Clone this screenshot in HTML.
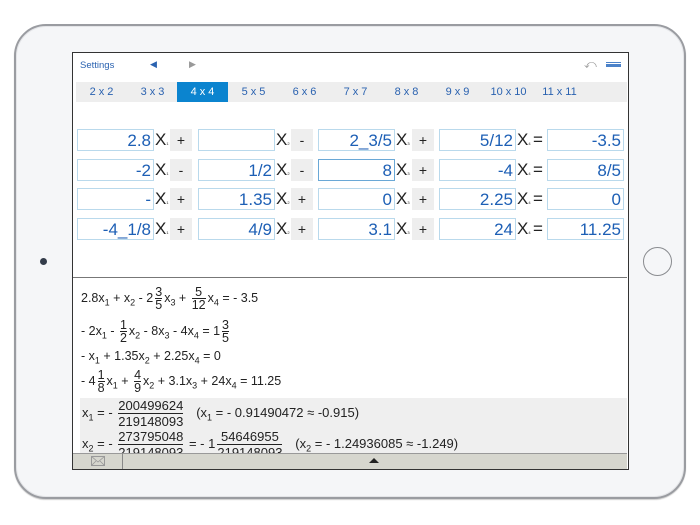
<!DOCTYPE html>
<html><head><meta charset="utf-8"><style>
*{margin:0;padding:0;box-sizing:border-box}
body{width:700px;height:525px;background:#fff;position:relative;overflow:hidden;font-family:"Liberation Sans",sans-serif}
.pad{position:absolute;left:14px;top:24px;width:672px;height:475px;border-radius:32px;background:#f5f6f8;border:2px solid #9a9ca1;box-shadow:inset 0 0 0 1px #e4e5e8,0 1px 1px #ccc}
.screen{position:absolute;left:72px;top:52px;width:557px;height:418px;background:#fff;border:1.5px solid #333}
.home{position:absolute;left:643px;top:247px;width:29px;height:29px;border-radius:50%;border:1.5px solid #8a8c90}
.cam{position:absolute;left:40px;top:258px;width:7px;height:7px;border-radius:50%;background:#333c4a}
.a{position:absolute}
.tabs{position:absolute;left:3px;top:29px;width:551px;height:20px;background:#eeeeee}
.tab{position:absolute;top:0;height:20px;width:51px;text-align:center;line-height:20px;font-size:11px;color:#2a62b0}
.tab.on{background:#0b84cf;color:#fff}
.inp{position:absolute;height:22px;width:77px;border:1px solid #b9d9ec;background:#fff;color:#1d5fb5;font-size:17px;text-align:right;line-height:21px;padding-right:2px}
.inp.f{border-color:#6aa8d6}
.x{position:absolute;font-size:17px;color:#222;line-height:22px}
.x small{font-size:4px}
.sg{position:absolute;width:22px;height:22px;background:#eeeeee;text-align:center;line-height:22px;font-size:14px;color:#222}
.eq{position:absolute;left:8px;font-size:12.5px;color:#222;white-space:nowrap}
.fr{display:inline-block;vertical-align:middle;text-align:center;line-height:12px;margin:0 2px}
.fr span{display:block}
.fr .n{border-bottom:1px solid #222}
sub{font-size:9px}
</style></head><body>
<div class="pad"></div>
<div class="cam"></div>
<div class="home"></div>
<div class="screen">
 <div class="a" style="left:7px;top:7px;font-size:9.5px;color:#2a62b0">Settings</div>
 <div class="a" style="left:77px;top:6px;font-size:9px;color:#2a62b0">◀</div>
 <div class="a" style="left:116px;top:6px;font-size:9px;color:#999">▶</div>
 <div class="a" style="left:511px;top:4px;font-size:12px;color:#999">⤺</div>
 <div class="a" style="left:533px;top:9px;width:15px;height:5px;border-top:1.5px solid #4c82c9;border-bottom:1.5px solid #4c82c9"></div>
 <div class="a" style="left:533px;top:11px;width:15px;height:1.5px;background:#4c82c9"></div>
 <div class="tabs">
  <div class="tab" style="left:0">2 x 2</div><div class="tab" style="left:51px">3 x 3</div><div class="tab on" style="left:101px">4 x 4</div><div class="tab" style="left:152px">5 x 5</div><div class="tab" style="left:203px">6 x 6</div><div class="tab" style="left:254px">7 x 7</div><div class="tab" style="left:305px">8 x 8</div><div class="tab" style="left:356px">9 x 9</div><div class="tab" style="left:407px">10 x 10</div><div class="tab" style="left:458px">11 x 11</div>
 </div>
 <div class="inp" style="left:4px;top:76px">2.8</div><div class="x" style="left:82px;top:76px">X<small>1</small></div><div class="sg" style="left:97px;top:76px">+</div>
 <div class="inp" style="left:125px;top:76px"></div><div class="x" style="left:203px;top:76px">X<small>2</small></div><div class="sg" style="left:218px;top:76px">-</div>
 <div class="inp" style="left:245px;top:76px">2_3/5</div><div class="x" style="left:323px;top:76px">X<small>3</small></div><div class="sg" style="left:339px;top:76px">+</div>
 <div class="inp" style="left:366px;top:76px">5/12</div><div class="x" style="left:444px;top:76px">X<small>4</small></div><div class="x" style="left:460px;top:76px">=</div>
 <div class="inp" style="left:474px;top:76px">-3.5</div>

 <div class="inp" style="left:4px;top:106px">-2</div><div class="x" style="left:82px;top:106px">X<small>1</small></div><div class="sg" style="left:97px;top:106px">-</div>
 <div class="inp" style="left:125px;top:106px">1/2</div><div class="x" style="left:203px;top:106px">X<small>2</small></div><div class="sg" style="left:218px;top:106px">-</div>
 <div class="inp f" style="left:245px;top:106px">8</div><div class="x" style="left:323px;top:106px">X<small>3</small></div><div class="sg" style="left:339px;top:106px">+</div>
 <div class="inp" style="left:366px;top:106px">-4</div><div class="x" style="left:444px;top:106px">X<small>4</small></div><div class="x" style="left:460px;top:106px">=</div>
 <div class="inp" style="left:474px;top:106px">8/5</div>

 <div class="inp" style="left:4px;top:135px">-</div><div class="x" style="left:82px;top:135px">X<small>1</small></div><div class="sg" style="left:97px;top:135px">+</div>
 <div class="inp" style="left:125px;top:135px">1.35</div><div class="x" style="left:203px;top:135px">X<small>2</small></div><div class="sg" style="left:218px;top:135px">+</div>
 <div class="inp" style="left:245px;top:135px">0</div><div class="x" style="left:323px;top:135px">X<small>3</small></div><div class="sg" style="left:339px;top:135px">+</div>
 <div class="inp" style="left:366px;top:135px">2.25</div><div class="x" style="left:444px;top:135px">X<small>4</small></div><div class="x" style="left:460px;top:135px">=</div>
 <div class="inp" style="left:474px;top:135px">0</div>

 <div class="inp" style="left:4px;top:165px">-4_1/8</div><div class="x" style="left:82px;top:165px">X<small>1</small></div><div class="sg" style="left:97px;top:165px">+</div>
 <div class="inp" style="left:125px;top:165px">4/9</div><div class="x" style="left:203px;top:165px">X<small>2</small></div><div class="sg" style="left:218px;top:165px">+</div>
 <div class="inp" style="left:245px;top:165px">3.1</div><div class="x" style="left:323px;top:165px">X<small>3</small></div><div class="sg" style="left:339px;top:165px">+</div>
 <div class="inp" style="left:366px;top:165px">24</div><div class="x" style="left:444px;top:165px">X<small>4</small></div><div class="x" style="left:460px;top:165px">=</div>
 <div class="inp" style="left:474px;top:165px">11.25</div>

 <div class="a" style="left:0;top:224px;width:554px;height:1px;background:#777"></div>

 <div class="eq" style="top:233px">2.8x<sub>1</sub> + x<sub>2</sub> - 2<span class="fr"><span class="n">3</span><span>5</span></span>x<sub>3</sub> + <span class="fr"><span class="n">5</span><span>12</span></span>x<sub>4</sub> = - 3.5</div>
 <div class="eq" style="top:266px">- 2x<sub>1</sub> - <span class="fr"><span class="n">1</span><span>2</span></span>x<sub>2</sub> - 8x<sub>3</sub> - 4x<sub>4</sub> = 1<span class="fr"><span class="n">3</span><span>5</span></span></div>
 <div class="eq" style="top:296px">- x<sub>1</sub> + 1.35x<sub>2</sub> + 2.25x<sub>4</sub> = 0</div>
 <div class="eq" style="top:316px">- 4<span class="fr"><span class="n">1</span><span>8</span></span>x<sub>1</sub> + <span class="fr"><span class="n">4</span><span>9</span></span>x<sub>2</sub> + 3.1x<sub>3</sub> + 24x<sub>4</sub> = 11.25</div>

 <div class="a" style="left:7px;top:345px;width:547px;height:55px;background:#efefef;overflow:hidden">
  <div class="eq" style="left:2px;top:0px;font-size:13px">x<sub>1</sub> = - <span class="fr" style="line-height:15px"><span class="n">200499624</span><span>219148093</span></span> &nbsp; (x<sub>1</sub> = - 0.91490472 ≈ -0.915)</div>
  <div class="eq" style="left:2px;top:31px;font-size:13px">x<sub>2</sub> = - <span class="fr" style="line-height:15px"><span class="n">273795048</span><span>219148093</span></span> = - 1<span class="fr" style="line-height:15px"><span class="n">54646955</span><span>219148093</span></span> &nbsp; (x<sub>2</sub> = - 1.24936085 ≈ -1.249)</div>
 </div>
 <div class="a" style="left:0;top:400px;width:554px;height:16px;background:#d6d6ce;border-top:1px solid #999"></div>
 <div class="a" style="left:49px;top:400px;width:1px;height:16px;background:#888"></div>
 <div class="a" style="left:18px;top:403px;width:14px;height:10px;border:1px solid #999"></div>
 <svg class="a" style="left:18px;top:403px" width="14" height="10"><path d="M0 0L7 6L14 0M0 10L5 5M14 10L9 5" stroke="#999" fill="none" stroke-width="0.8"/></svg>
 <div class="a" style="left:296px;top:405px;width:0;height:0;border-left:5px solid transparent;border-right:5px solid transparent;border-bottom:5px solid #222"></div>
</div>
</body></html>
